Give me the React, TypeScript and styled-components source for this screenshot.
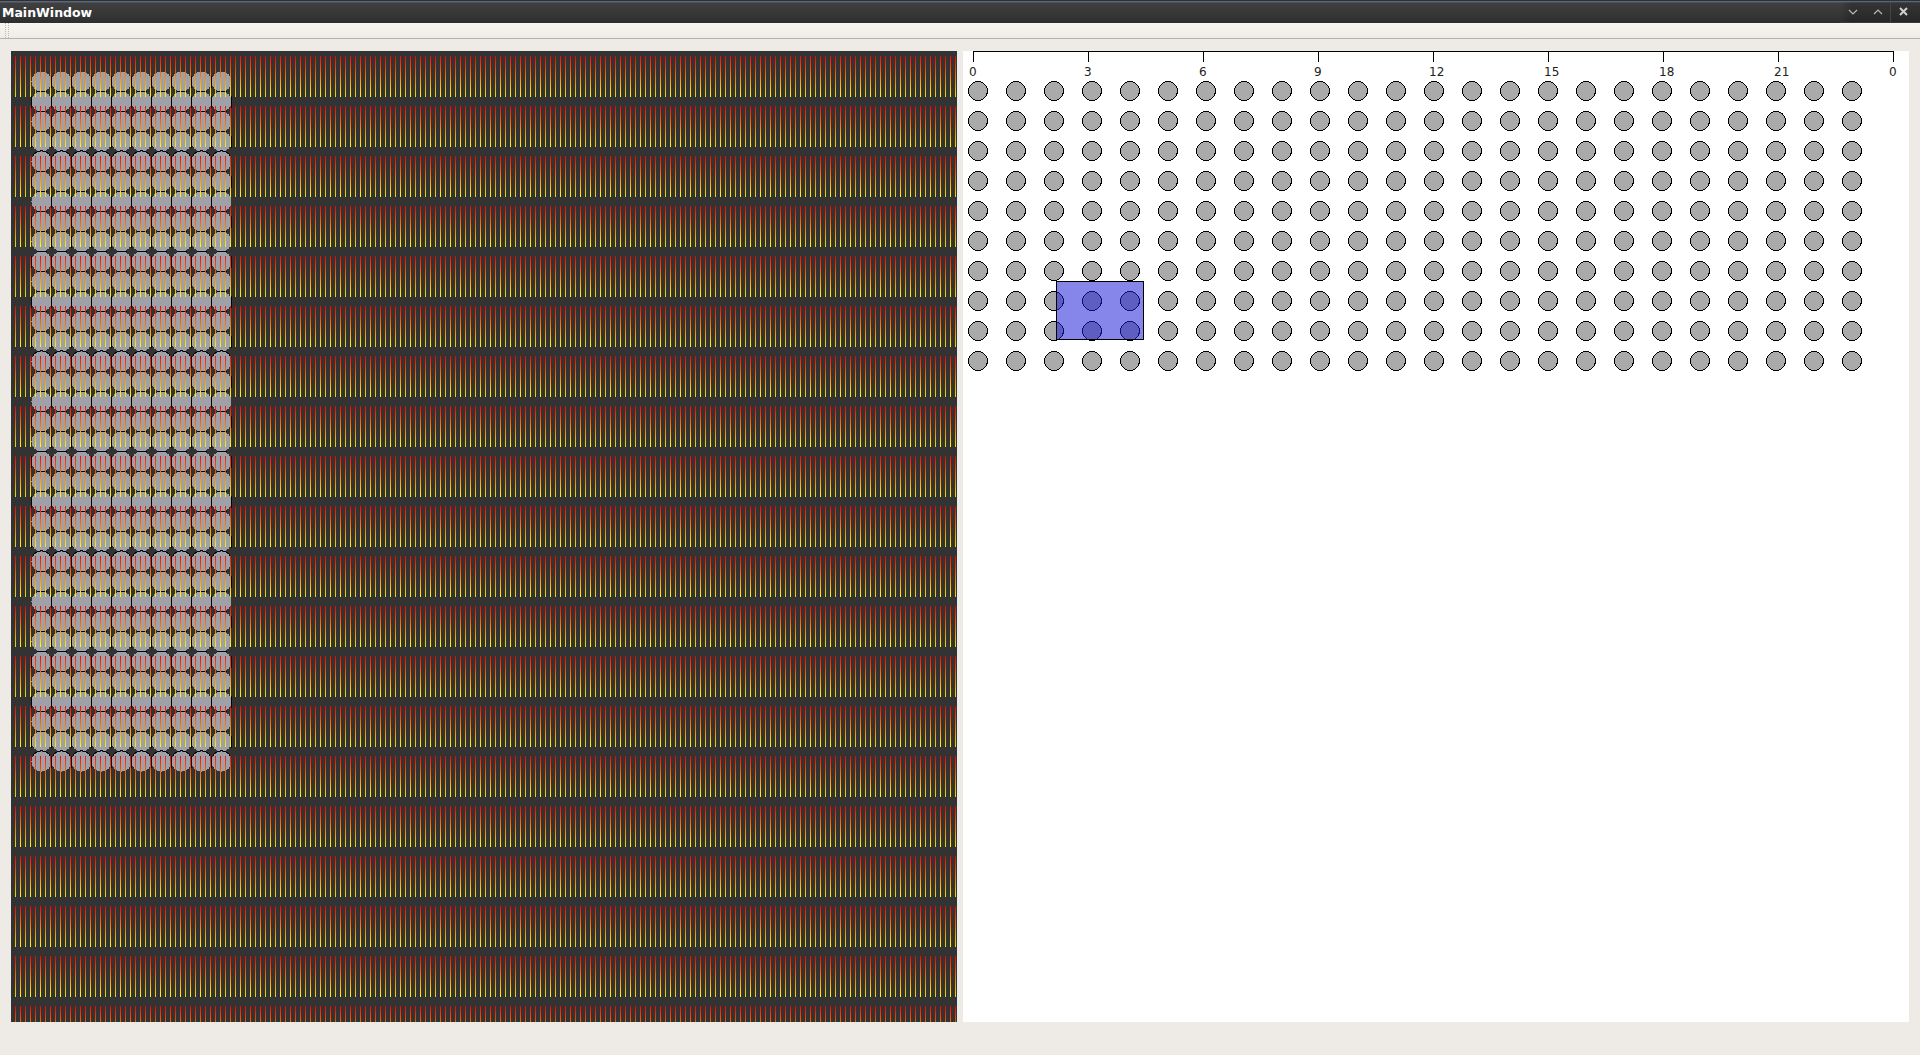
import React from 'react';
import styled, {createGlobalStyle} from 'styled-components';

const GlobalStyle = createGlobalStyle`
  html, body {
    margin: 0;
    padding: 0;
    background: #EEEBE7;
  }
`;

const Window = styled.div`
  display: flex;
  flex-direction: column;
  width: 1920px;
  height: 1055px;
  overflow: hidden;
  background: #EEEBE7;
`;

const TitleBar = styled.div`
  display: flex;
  align-items: center;
  justify-content: space-between;
  height: 23px;
  box-sizing: border-box;
  padding-left: 2px;
  border-top: 1px solid #2C3038;
  background: linear-gradient(#5C6672 0, #5C6672 1px, #404040 2px, #2E2E2E 100%);
`;

const Title = styled.span`
  font-family: "DejaVu Sans", sans-serif;
  font-weight: bold;
  font-size: 12.5px;
  color: #FFFFFF;
`;

const TitleButtons = styled.div`
  display: flex;
  align-items: center;
  height: 20px;
  padding-right: 5px;
  background: linear-gradient(90deg, rgba(0, 0, 0, 0), rgba(0, 0, 0, 0.18) 12px);
  border-bottom: 1px solid #3A3A3A;
`;

const TitleButton = styled.button<{$divider?: boolean}>`
  display: flex;
  align-items: center;
  justify-content: center;
  width: 25px;
  height: 20px;
  padding: 0;
  border: none;
  border-left: ${p => (p.$divider ? '1px solid #454545' : 'none')};
  background: none;
`;

const ToolBar = styled.div`
  display: flex;
  height: 15px;
  padding-left: 5px;
  background: linear-gradient(#F8F6F1, #EFECE6);
  border-bottom: 1px solid #B6B2AD;
`;

const Grip = styled.div`
  width: 2px;
  border-left: 1px dotted #BDBAB4;
  border-right: 1px dotted #BDBAB4;
`;

const Central = styled.div`
  display: flex;
  gap: 6px;
  padding: 12px 0 0 11px;
`;

const DarkPanel = styled.div`
  width: 946px;
  height: 971px;
  background: #333333;
`;

const LightPanel = styled(DarkPanel)`
  background: #FFFFFF;
`;

const Chart = styled.svg`
  display: block;
`;

const TickLabel = styled.text`
  font-family: "DejaVu Sans", sans-serif;
  font-size: 12px;
  fill: #222222;
`;

const BAR_COUNT = 189;
const BAR_ROWS = 20;
const DOT_ROWS = 35;
const DOT_COLS = 10;
const TICKS = ['0', '3', '6', '9', '12', '15', '18', '21', '0'];

const range = (n: number): number[] => Array.from({length: n}, (_, i) => i);

// black seams between the packed dots: short where they touch, a full arc every tenth row
const seamPath = (): string => {
  let d = '';
  range(DOT_ROWS).forEach(row => {
    const top = 20.5 + row * 20;
    const mid = top + 10;
    range(DOT_COLS + 1).forEach(col => {
      const x = 20.5 + col * 20;
      const isEdge = col === 0 || col === DOT_COLS;
      if (!isEdge || row % 2 === 1) {
        d += `M${x} ${mid - 6}V${mid + 6}`;
      }
    });
    range(DOT_COLS).forEach(col => {
      const cx = 30.5 + col * 20;
      if (row % 10 === 4) {
        d += `M${cx - 9} ${top + 5}A10 10 0 0 1 ${cx + 9} ${top + 5}`;
      } else if (row > 0) {
        d += `M${cx - 5} ${top}H${cx + 5}`;
      }
    });
  });
  return d;
};

const SpectrumChart = (): JSX.Element => (
  <Chart width={946} height={971}>
    <defs>
      <linearGradient id="heat" x1="0" y1="0" x2="0" y2="1">
        <stop offset="0" stopColor="#FF0000" />
        <stop offset="1" stopColor="#FFFF00" />
      </linearGradient>
      <g id="barRow">
        {range(BAR_COUNT).map(i => (
          <rect
            key={i}
            x={4 + i * 5}
            y={0}
            width={1}
            height={41}
            fill="url(#heat)"
            opacity={i % 2 === 0 ? 0.85 : 1}
          />
        ))}
      </g>
    </defs>
    <g shapeRendering="crispEdges">
      {range(DOT_ROWS).map(row =>
        range(DOT_COLS).map(col => (
          <circle
            key={`${row}-${col}`}
            cx={30.5 + col * 20}
            cy={30.5 + row * 20}
            r={10}
            fill="#A0A0A8"
          />
        ))
      )}
      <path d={seamPath()} fill="none" stroke="#000000" />
    </g>
    {range(BAR_ROWS).map(row => (
      <use key={row} href="#barRow" y={5 + row * 50} />
    ))}
  </Chart>
);

const GridChart = (): JSX.Element => (
  <Chart width={946} height={971}>
    <g shapeRendering="crispEdges" stroke="#000000">
      <line x1={10} y1={0.5} x2={931} y2={0.5} />
      {TICKS.map((_, i) => (
        <line key={i} x1={10.5 + i * 115} y1={0} x2={10.5 + i * 115} y2={11} />
      ))}
    </g>
    {TICKS.map((label, i) => (
      <TickLabel key={i} x={6 + i * 115} y={25}>
        {label}
      </TickLabel>
    ))}
    <g shapeRendering="crispEdges">
      {range(10).map(row =>
        range(24).map(col => (
          <circle
            key={`${row}-${col}`}
            cx={15 + col * 38}
            cy={40 + row * 30}
            r={9.5}
            fill="#AAAAAA"
            stroke="#000000"
          />
        ))
      )}
      <rect
        x={93.5}
        y={230.5}
        width={87}
        height={58}
        fill="rgba(24, 24, 216, 0.53)"
        stroke="#000000"
      />
    </g>
  </Chart>
);

const App = (): JSX.Element => (
  <Window>
    <GlobalStyle />
    <TitleBar>
      <Title>MainWindow</Title>
      <TitleButtons>
        <TitleButton>
          <svg width="10" height="8" viewBox="0 0 10 8">
            <path d="M1 2l4 4 4-4" fill="none" stroke="#B8B8B8" strokeWidth="1.2" />
          </svg>
        </TitleButton>
        <TitleButton>
          <svg width="10" height="8" viewBox="0 0 10 8">
            <path d="M1 6l4-4 4 4" fill="none" stroke="#B8B8B8" strokeWidth="1.2" />
          </svg>
        </TitleButton>
        <TitleButton $divider>
          <svg width="9" height="9" viewBox="0 0 9 9">
            <path d="M1 1l7 7M8 1l-7 7" fill="none" stroke="#D0D0D0" strokeWidth="2" />
          </svg>
        </TitleButton>
      </TitleButtons>
    </TitleBar>
    <ToolBar>
      <Grip />
    </ToolBar>
    <Central>
      <DarkPanel>
        <SpectrumChart />
      </DarkPanel>
      <LightPanel>
        <GridChart />
      </LightPanel>
    </Central>
  </Window>
);

export default App;
